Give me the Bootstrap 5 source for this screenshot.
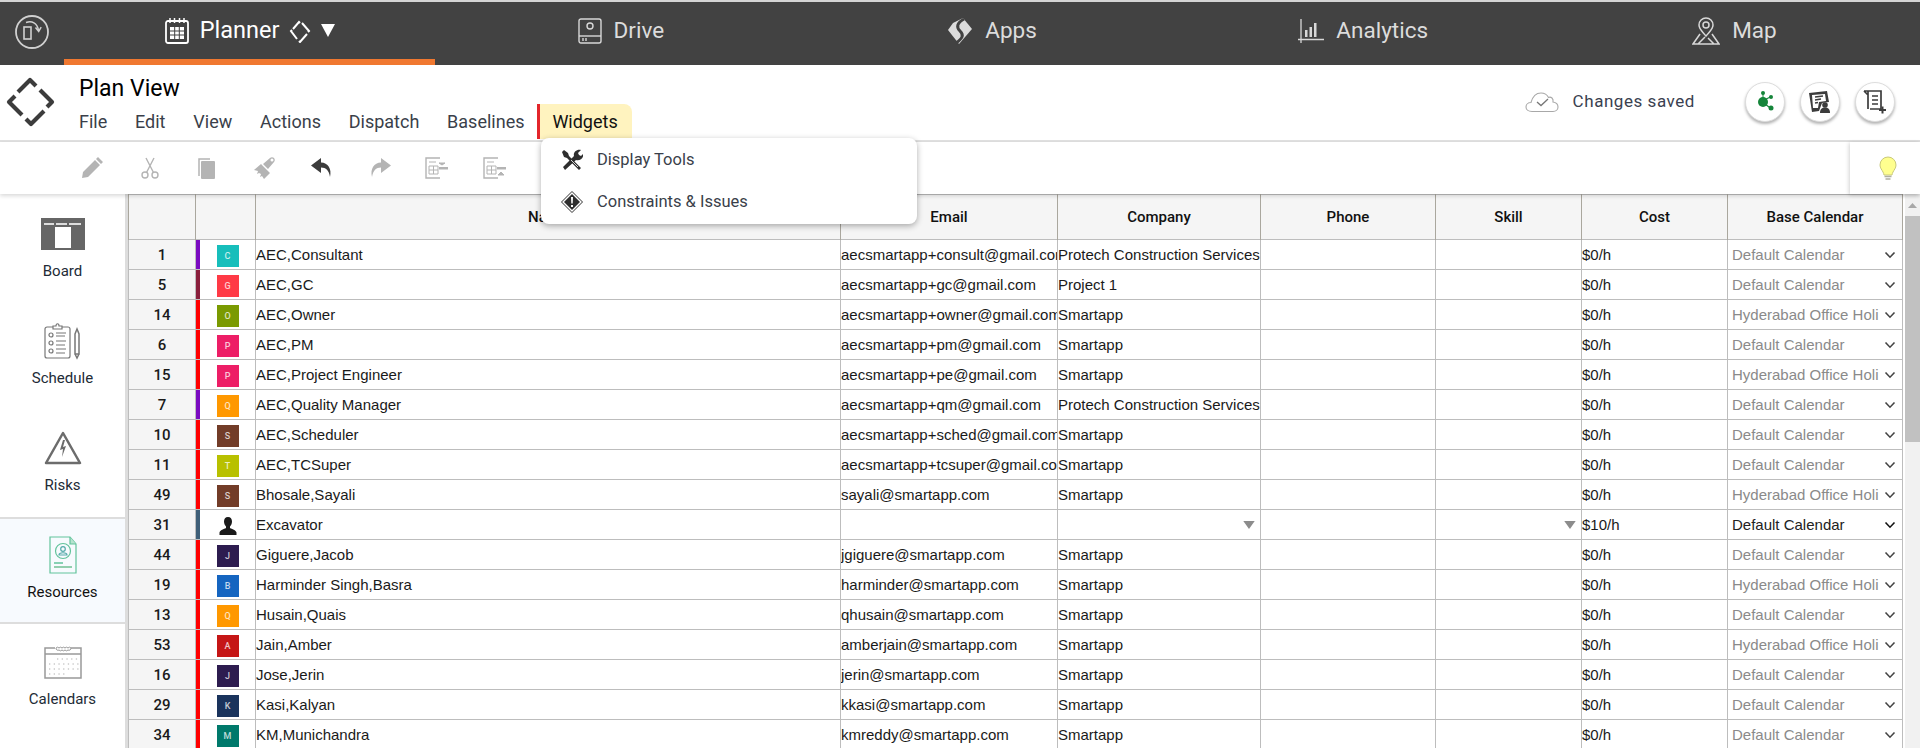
<!DOCTYPE html>
<html lang="en">
<head>
<meta charset="utf-8">
<title>Plan View</title>
<link href="https://cdn.jsdelivr.net/npm/bootstrap@5.3.0/dist/css/bootstrap.min.css" rel="stylesheet">
<style>
html,body{height:748px;overflow:hidden}
body{font-family:Roboto,"Liberation Sans",sans-serif;color:#212529;background:#fff}
.top-strip{height:2px;background:#d4d4d4}
.app-bar{height:63px;background:#424242}
.app-home{width:64px}
.app-tab{flex:1 1 0;height:63px;color:#dcdcdc;font-size:22.5px;gap:12px;text-decoration:none;padding-bottom:6px}
.app-tab.on{color:#fff;font-size:23.5px;border-bottom:6px solid #f07830;padding-bottom:0;gap:10px}
.head-row{height:77px;border-bottom:2px solid #e0e0e0}
.head-logo{width:79px;padding-left:6px;padding-bottom:2px}
.plan-title{font-size:23px;line-height:28px;color:#000;margin-top:10px}
.menu-row{margin-left:-13.9px;margin-top:1px;height:36px}
.menu-link{padding:0 13.9px;font-size:18px;line-height:36px;color:#3a3f4a}
.menu-link.hot{padding:0 14px 0 12px;background:#fff3bf;border-left:3px solid #e3262b;border-top-right-radius:8px;color:#111;height:35px;margin-left:-1px}
.saved{color:#3a4150;font-size:17px;letter-spacing:.55px;gap:14px;margin-right:50px}
.round-btn{width:40px;height:40px;border-radius:50%;background:#fff;border:1px solid #ddd;box-shadow:0 2px 3px rgba(0,0,0,.3);margin-right:15px}
.head-end{padding-right:10px;padding-bottom:1px}
.tool-row{height:52px;box-shadow:0 2px 4px rgba(0,0,0,.15);position:relative;z-index:2;padding-left:80px;gap:33.5px}
.tip-box{width:70px;height:52px;background:#fff;box-shadow:-1px 1px 4px rgba(0,0,0,.18);padding-left:29px}
.work{height:554px;overflow:hidden}
.side{width:128px;flex:none;border-right:3px solid #ddd;padding-top:2px}
.side-item{height:107px;color:#222b36;font-size:15px;line-height:22px;padding-top:12px}
.side-icon{height:52px}
.side-item.on{background:#f7fafe;border-top:2px solid #ddd;border-bottom:2px solid #ddd;height:107px;color:#111;padding-top:10px}
.grid-wrap{flex:1 1 0;overflow:hidden}
.res-grid.table{table-layout:fixed;width:1774px;margin:0;border-color:#bdbdbd;font-family:"Liberation Sans",Arial,sans-serif;font-size:15px;color:#1a1a1a}
.res-grid.table>*>*>*{padding:1px 0 0;height:30px;line-height:28px;white-space:nowrap;overflow:hidden;vertical-align:middle;border-color:#bdbdbd}
.res-grid.table>thead>tr>th{height:45px;padding:0;background:#f5f5f5;font:500 15px/44px Roboto,sans-serif;color:#111;text-align:center;border-color:#aaa79e;border-top:0}
.res-grid.table>tbody>tr>td.num{background:#f5f5f5;font:500 15px/28px Roboto,sans-serif;text-align:center}
.res-grid.table>tbody>tr>td.pic{text-align:center}
.res-grid.table>tbody>tr>td.bar-red{box-shadow:inset 4px 0 0 #f00}
.res-grid.table>tbody>tr>td.bar-purple{box-shadow:inset 4px 0 0 #7a0bc0}
.res-grid.table>tbody>tr>td.bar-maroon{box-shadow:inset 4px 0 0 #8a1f3c}
.res-grid.table>tbody>tr>td.bar-slate{box-shadow:inset 4px 0 0 #3f5f78}
.face{display:inline-flex;align-items:center;justify-content:center;width:22px;height:22px;margin-left:4px;vertical-align:middle;color:rgba(255,255,255,.75);font:500 9px/1 Roboto,sans-serif}
.f-teal{background:#17bebb}.f-red{background:#ff3a46}.f-olive{background:#7a9a01}.f-pink{background:#ed1e66}.f-orange{background:#ff9800}.f-brown{background:#723c28}.f-lime{background:#b8c000}.f-plum{background:#2d1c4f}.f-blue{background:#1565c0}.f-crim{background:#c51616}.f-navy{background:#1a335c}.f-green{background:#00796b}
.cal{color:#8a8a8a;padding:0 6px 0 4px}
.cal span{flex:1 1 0;min-width:0;overflow:hidden;margin-right:5px}
.cal svg{color:#444;flex:none}
.cal.live{color:#222}
.cal.live svg{color:#111}
.pick-end{height:24px;padding-right:5px}
.bar-track{width:15px;flex:none;background:#f1f1f1}
.bar-arrow{height:22px}
.bar-thumb{height:226px;background:#c1c1c1}
.menu-pop{position:absolute;left:541px;top:138px;width:376px;height:86px;min-width:0;padding:0;border:0;border-radius:8px;box-shadow:0 2px 6px rgba(0,0,0,.32);z-index:10}
.menu-pop .dropdown-item{height:42px;padding:0 0 0 20px;gap:14px;font-size:16.5px;color:#3a3f4a}
.menu-pop .dropdown-item:first-child{margin-top:1px}
</style>
</head>
<body>
<svg width="0" height="0" class="position-absolute">
  <symbol id="chev" viewBox="0 0 12 8"><path d="M1.5 1.5 6 6.2l4.500-4.700" fill="none" stroke="currentColor" stroke-width="1.600"/></symbol>
  <symbol id="person" viewBox="0 0 20 20"><path d="M10 1c2.700 0 4 2 4 4.500 0 2-1 4-2 5v1.500c2 1 6 2 6.500 4.500V19h-17v-2.500C2 14 6 13 8 12v-1.500c-1-1-2-3-2-5C6 3 7.300 1 10 1z" fill="#1a1a1a"/></symbol>
  <symbol id="tick" viewBox="0 0 10 7"><path d="M0 0h10L5 7z" fill="#8c8c8c"/></symbol>
</svg>

<div class="top-strip"></div>
<nav class="app-bar d-flex align-items-stretch">
  <div class="app-home d-flex align-items-center justify-content-center pb-1">
    <svg width="38" height="38" viewBox="0 0 38 38" fill="none" stroke="#d0d0d0"><circle cx="19" cy="19" r="16" stroke-width="1.800"/><rect x="11" y="14" width="7" height="12" stroke-width="1.600"/><path d="M13 9.500c6-2 11 .5 12.500 7.500" stroke-width="1.500"/><path d="M22.500 14.500l3.200 4 2.500-4.300" stroke-width="1.500"/></svg>
  </div>
  <a class="app-tab on d-flex align-items-center justify-content-center" href="#">
    <svg width="26" height="28" viewBox="0 0 26 28" fill="none" stroke="#fff"><rect x="2" y="4" width="22" height="22" rx="2" stroke-width="1.800"/><path d="M6 1v5M10.500 1v5M15.500 1v5M20 1v5" stroke-width="1.500"/><path d="M6 10h14v12H6z" fill="#fff" stroke="none"/><path d="M10.700 10v12M15.300 10v12M6 14h14M6 18h14" stroke="#424242"/></svg>
    <span>Planner</span>
    <svg width="22" height="24" viewBox="0 0 22 24" fill="none" stroke="#fff" stroke-width="2"><path d="M4 10 10 3l1 1M13 4l7 8-1 1M18 15l-7 8-1-1M8 20l-6-8 1-1"/></svg>
    <svg width="14" height="13" viewBox="0 0 14 13"><path d="M0 0h14L7 13z" fill="#fff"/></svg>
  </a>
  <a class="app-tab d-flex align-items-center justify-content-center" href="#">
    <svg width="24" height="26" viewBox="0 0 24 26" fill="none" stroke="#d8d8d8" stroke-width="1.400"><rect x="1" y="1" width="22" height="24" rx="2"/><path d="M1 18h22"/><circle cx="12" cy="8" r="3"/><path d="M5 20v3M8 20v3"/></svg>
    <span>Drive</span>
  </a>
  <a class="app-tab d-flex align-items-center justify-content-center" href="#">
    <svg width="26" height="28" viewBox="0 0 26 28"><path d="M16 1 25 12 12 27 1 13 6 6z" fill="#dcdcdc"/><path d="M17 2C10 6 9 10 13 14s3 7-4 12" fill="none" stroke="#424242" stroke-width="3"/></svg>
    <span>Apps</span>
  </a>
  <a class="app-tab d-flex align-items-center justify-content-center" href="#">
    <svg width="26" height="26" viewBox="0 0 26 26" fill="none" stroke="#d8d8d8"><path d="M3 1v24M0 21.500h26" stroke-width="1.300"/><path d="M7 19h2.500v-7H7zM11.500 19H14V9h-2.500zM16 19h2.500V5H16z" fill="#d8d8d8" stroke="none"/></svg>
    <span>Analytics</span>
  </a>
  <a class="app-tab d-flex align-items-center justify-content-center" href="#">
    <svg width="28" height="28" viewBox="0 0 28 28" fill="none" stroke="#d8d8d8" stroke-width="1.500"><path d="M14 19C10 14 7 12 7 8a7 7 0 0 1 14 0c0 4-3 6-7 11z"/><circle cx="14" cy="8" r="3"/><path d="M8 17 1 27h26l-7-10M6 27l7-7M22 27l-6-6"/></svg>
    <span>Map</span>
  </a>
</nav>

<header class="head-row d-flex">
  <div class="head-logo d-flex align-items-center">
    <svg width="50" height="50" viewBox="0 0 50 50" fill="none" stroke="#3c3c3c" stroke-width="4.200" stroke-linejoin="round"><path d="M12 15 24 3l6 6M34 13l12 12-5 5M38 34 25 47l-5-5M16 38 3 25l6-6"/></svg>
  </div>
  <div>
    <div class="plan-title">Plan View</div>
    <div class="menu-row d-flex">
      <div class="menu-link">File</div>
      <div class="menu-link">Edit</div>
      <div class="menu-link">View</div>
      <div class="menu-link">Actions</div>
      <div class="menu-link">Dispatch</div>
      <div class="menu-link">Baselines</div>
      <div class="menu-link hot">Widgets</div>
    </div>
  </div>
  <div class="head-end ms-auto d-flex align-items-center">
    <div class="saved d-flex align-items-center">
      <svg width="34" height="22" viewBox="0 0 34 22" fill="none" stroke="#a8a8a8" stroke-width="1.100"><path d="M7 20.500C3 20.500 1 18.500 1 16s2-4.500 5-4.500C7.500 6 11 2 16 2c3.500 0 6 1.500 7.500 4.500 1-.5 2.500-.3 3.500.5 1 1 1.300 2.500 1 4 3 .5 5 2.500 5 5s-2 4.500-5 4.500z"/><path d="M12 11l4 3.500 7-6.500" stroke="#777" stroke-width="1.300"/></svg>
      <span>Changes saved</span>
    </div>
    <div class="round-btn d-flex align-items-center justify-content-center">
      <svg width="20" height="24" viewBox="0 0 20 24" fill="#15853a"><circle cx="8" cy="12" r="5"/><circle cx="8" cy="3" r="2"/><circle cx="16" cy="7" r="2"/><circle cx="16" cy="18" r="2.500"/><path d="M7.500 3h1v6h-1zM10 9l5-2.500.5 1-5 2.500zM11 14l4 3-.7 1-4-3z"/></svg>
    </div>
    <div class="round-btn d-flex align-items-center justify-content-center">
      <svg width="24" height="24" viewBox="0 0 24 24"><path d="M1 3 19 1l2 11-7 1-3 8-7 1z" fill="#3c3c3c"/><path d="M4 5l13-1 1 7-7 1-1 6H5z" fill="#fff"/><path d="M7 7l8-1M7 10l6-1M7 13l3-.5" stroke="#3c3c3c" stroke-width="1.300"/><circle cx="17" cy="15" r="2.800" fill="#3c3c3c"/><path d="M12 23c0-4 2-5.500 5-5.500s5 1.500 5 5.500z" fill="#3c3c3c"/></svg>
    </div>
    <div class="round-btn d-flex align-items-center justify-content-center">
      <svg width="24" height="26" viewBox="0 0 24 26" fill="none" stroke="#3c3c3c" stroke-width="1.700"><path d="M1 2h17v18H7M5 2v18M1 2l4 4M9 7h6M9 11h6M9 15h6"/><path d="M16 21h7M19.500 17.500v7" stroke-width="2"/></svg>
    </div>
  </div>
</header>

<div class="tool-row d-flex align-items-center">
  <svg width="24" height="24" viewBox="0 0 24 24" fill="#b4b4b4"><path d="M2 22l1-6L15 4l5 5L8 21zM16 3l2-2 5 5-2 2z"/></svg>
  <svg width="24" height="24" viewBox="0 0 24 24" fill="none" stroke="#b4b4b4" stroke-width="1.400"><circle cx="7" cy="19" r="3"/><circle cx="17" cy="19" r="3"/><path d="M8.500 16.500 16 2M15.500 16.500 8 2"/></svg>
  <svg width="24" height="24" viewBox="0 0 24 24"><path d="M4 20V3h11" fill="none" stroke="#b4b4b4" stroke-width="1.500"/><rect x="6" y="5" width="14" height="18" rx="1" fill="#b4b4b4"/></svg>
  <svg width="24" height="24" viewBox="0 0 24 24" fill="#b4b4b4"><path d="M1 14l7-6 9 9-6 6-2-3-2 1 1-3-2-1-2 1 1-3z"/><path d="M10 8l7-6c1-1 3-1 4 0s1 3 0 4l-6 7z"/><circle cx="19" cy="4" r="1.500" fill="#fff"/></svg>
  <svg width="24" height="24" viewBox="0 0 24 24" fill="#3c3c3c"><path d="M11 2 1 9.500 11 17v-5.500c5 0 8 3 9 9.500 2-8-2-14.500-9-14.500z"/></svg>
  <svg width="24" height="24" viewBox="0 0 24 24" fill="#b4b4b4"><path d="M13 2l10 7.500L13 17v-5.500c-5 0-8 3-9 9.500-2-8 2-14.500 9-14.500z"/></svg>
  <svg width="24" height="24" viewBox="0 0 24 24" fill="none" stroke="#b4b4b4"><path d="M15 2H1v20h14" stroke-width="1.400"/><path d="M4 10h9v8H4zM4 14h9M8.500 10v8"/><path d="M14 11h9v2.500h-9z" fill="#b4b4b4" stroke="none"/><path d="M4 6h7M14 7l3 2 3-2z" fill="#b4b4b4"/></svg>
  <svg width="24" height="24" viewBox="0 0 24 24" fill="none" stroke="#b4b4b4"><path d="M15 2H1v20h14" stroke-width="1.400"/><path d="M4 10h9v8H4zM4 14h9M8.500 10v8"/><path d="M14 11h9v2.500h-9z" fill="#b4b4b4" stroke="none"/><path d="M4 6h7M15 19l3-3 3 3z" fill="#b4b4b4"/></svg>
  <div class="tip-box ms-auto d-flex align-items-center">
    <svg width="18" height="24" viewBox="0 0 18 24"><path d="M9 1a8 8 0 0 0-8 8c0 3 2 5 3 7 .5 1 .8 2 1 3h8c.2-1 .5-2 1-3 1-2 3-4 3-7a8 8 0 0 0-8-8z" fill="#ffff8f" stroke="#c9c97a"/><path d="M5.500 20.500h7M6.500 23h5" stroke="#b0b0a0" stroke-width="1.500"/></svg>
  </div>
</div>

<div class="dropdown-menu show menu-pop">
  <a class="dropdown-item d-flex align-items-center" href="#">
    <svg width="22" height="22" viewBox="0 0 22 22" fill="#2e2e2e"><path d="M1 3l2-2 4 3 1 3 12 12-2 2L6 9 3 8z"/><path d="M2 18 13 7c-1-3 2-7 7-6l-3 3 1 2 2 1 2-2c1 4-3 7-7 6L4 21z"/><path d="M10 11l7 7" stroke="#fff" stroke-width=".8"/></svg>
    <span>Display Tools</span>
  </a>
  <a class="dropdown-item d-flex align-items-center" href="#">
    <svg width="22" height="22" viewBox="0 0 22 22"><path d="M11 .5 21.500 11 11 21.500.5 11z" fill="#fff" stroke="#2e2e2e"/><path d="M11 3l8 8-8 8-8-8z" fill="#2e2e2e"/><path d="M10 6h2l-.3 6.500h-1.400zM10 14h2v2h-2z" fill="#fff"/></svg>
    <span>Constraints &amp; Issues</span>
  </a>
</div>

<main class="work d-flex">
  <aside class="side">
    <div class="side-item d-flex flex-column align-items-center">
      <div class="side-icon d-flex align-items-center">
        <svg width="44" height="32" viewBox="0 0 44 32"><rect width="44" height="32" fill="#666"/><path d="M14 9h16v21H14z" fill="#fff"/><path d="M3 5h10v2H3zM15 5h11v2H15zM28 5h12v2H28z" fill="#ddd"/></svg>
      </div>
      <div>Board</div>
    </div>
    <div class="side-item d-flex flex-column align-items-center">
      <div class="side-icon d-flex align-items-center">
        <svg width="38" height="38" viewBox="0 0 38 38" fill="none" stroke="#777" stroke-width="1.200"><path d="M9 5H3a2 2 0 0 0-2 2v27a2 2 0 0 0 2 2h21a2 2 0 0 0 2-2V7a2 2 0 0 0-2-2h-6"/><path d="M9 7V4h3c0-3 3-3 3 0h3v3z"/><circle cx="7" cy="13" r="2"/><circle cx="7" cy="21" r="2"/><circle cx="7" cy="29" r="2"/><path d="M12 11h10M12 14h9M12 19h10M12 23h9M12 27h10M12 31h9"/><path d="M31 12l2-5 2 5v20h-4zM31 32l2 4 2-4" stroke-width="1.500"/></svg>
      </div>
      <div>Schedule</div>
    </div>
    <div class="side-item d-flex flex-column align-items-center">
      <div class="side-icon d-flex align-items-center">
        <svg width="38" height="34" viewBox="0 0 38 34"><path d="M19 2 36 32H2z" fill="none" stroke="#6c6c6c" stroke-width="2.500" stroke-linejoin="round"/><path d="M19 9l-3 10 3-1-1 8 4-11-3 1 2-7z" fill="#6c6c6c"/></svg>
      </div>
      <div>Risks</div>
    </div>
    <div class="side-item on d-flex flex-column align-items-center">
      <div class="side-icon d-flex align-items-center">
        <svg width="28" height="38" viewBox="0 0 28 38" fill="none" stroke="#62c39b" stroke-width="1.200"><path d="M1 1h20l6 7v29H1z"/><path d="M21 1v7h6" fill="#b6e3cf"/><circle cx="14" cy="15" r="7.500"/><circle cx="14" cy="13" r="2.300" stroke="#5aa"/><path d="M10 19c0-3 8-3 8 0z" stroke="#5aa"/><path d="M5 27h9" stroke-width="1.500"/><path d="M5 31h18" stroke="#86c9a5" stroke-width="1.800"/></svg>
      </div>
      <div>Resources</div>
    </div>
    <div class="side-item d-flex flex-column align-items-center">
      <div class="side-icon d-flex align-items-center">
        <svg width="38" height="34" viewBox="0 0 38 34" fill="none" stroke="#999" stroke-width="1.500"><path d="M11 3H1v30h36V3H27M1 9h36"/><path d="M12 3a2 2 0 0 1 3 0 2 2 0 0 1 3 0 2 2 0 0 1 3 0 2 2 0 0 1 3 0 2 2 0 0 1 3 0 2 2 0 0 1-3 2 2 2 0 0 1-3 0 2 2 0 0 1-3 0 2 2 0 0 1-3 0 2 2 0 0 1-3-2" stroke-width="1"/><path d="M13 14h22M5 19h30M5 24h30M5 29h18" stroke="#b0b0b0" stroke-width="1.200" stroke-dasharray="1.300 3.400"/></svg>
      </div>
      <div>Calendars</div>
    </div>
  </aside>

  <div class="grid-wrap">
    <table class="table table-bordered res-grid">
      <colgroup><col style="width:67px"><col style="width:60px"><col style="width:585px"><col style="width:217px"><col style="width:203px"><col style="width:175px"><col style="width:146px"><col style="width:146px"><col style="width:175px"></colgroup>
      <thead><tr><th></th><th></th><th>Name</th><th>Email</th><th>Company</th><th>Phone</th><th>Skill</th><th>Cost</th><th>Base Calendar</th></tr></thead>
      <tbody>
        <tr><td class="num">1</td><td class="pic bar-purple"><span class="face f-teal">C</span></td><td>AEC,Consultant</td><td>aecsmartapp+consult@gmail.com</td><td>Protech Construction Services</td><td></td><td></td><td>$0/h</td><td><div class="cal d-flex align-items-center"><span>Default Calendar</span><svg width="12" height="8"><use href="#chev"/></svg></div></td></tr>
        <tr><td class="num">5</td><td class="pic bar-maroon"><span class="face f-red">G</span></td><td>AEC,GC</td><td>aecsmartapp+gc@gmail.com</td><td>Project 1</td><td></td><td></td><td>$0/h</td><td><div class="cal d-flex align-items-center"><span>Default Calendar</span><svg width="12" height="8"><use href="#chev"/></svg></div></td></tr>
        <tr><td class="num">14</td><td class="pic bar-red"><span class="face f-olive">O</span></td><td>AEC,Owner</td><td>aecsmartapp+owner@gmail.com</td><td>Smartapp</td><td></td><td></td><td>$0/h</td><td><div class="cal d-flex align-items-center"><span>Hyderabad Office Holi</span><svg width="12" height="8"><use href="#chev"/></svg></div></td></tr>
        <tr><td class="num">6</td><td class="pic bar-red"><span class="face f-pink">P</span></td><td>AEC,PM</td><td>aecsmartapp+pm@gmail.com</td><td>Smartapp</td><td></td><td></td><td>$0/h</td><td><div class="cal d-flex align-items-center"><span>Default Calendar</span><svg width="12" height="8"><use href="#chev"/></svg></div></td></tr>
        <tr><td class="num">15</td><td class="pic bar-red"><span class="face f-pink">P</span></td><td>AEC,Project Engineer</td><td>aecsmartapp+pe@gmail.com</td><td>Smartapp</td><td></td><td></td><td>$0/h</td><td><div class="cal d-flex align-items-center"><span>Hyderabad Office Holi</span><svg width="12" height="8"><use href="#chev"/></svg></div></td></tr>
        <tr><td class="num">7</td><td class="pic bar-purple"><span class="face f-orange">Q</span></td><td>AEC,Quality Manager</td><td>aecsmartapp+qm@gmail.com</td><td>Protech Construction Services</td><td></td><td></td><td>$0/h</td><td><div class="cal d-flex align-items-center"><span>Default Calendar</span><svg width="12" height="8"><use href="#chev"/></svg></div></td></tr>
        <tr><td class="num">10</td><td class="pic bar-red"><span class="face f-brown">S</span></td><td>AEC,Scheduler</td><td>aecsmartapp+sched@gmail.com</td><td>Smartapp</td><td></td><td></td><td>$0/h</td><td><div class="cal d-flex align-items-center"><span>Default Calendar</span><svg width="12" height="8"><use href="#chev"/></svg></div></td></tr>
        <tr><td class="num">11</td><td class="pic bar-red"><span class="face f-lime">T</span></td><td>AEC,TCSuper</td><td>aecsmartapp+tcsuper@gmail.com</td><td>Smartapp</td><td></td><td></td><td>$0/h</td><td><div class="cal d-flex align-items-center"><span>Default Calendar</span><svg width="12" height="8"><use href="#chev"/></svg></div></td></tr>
        <tr><td class="num">49</td><td class="pic bar-red"><span class="face f-brown">S</span></td><td>Bhosale,Sayali</td><td>sayali@smartapp.com</td><td>Smartapp</td><td></td><td></td><td>$0/h</td><td><div class="cal d-flex align-items-center"><span>Hyderabad Office Holi</span><svg width="12" height="8"><use href="#chev"/></svg></div></td></tr>
        <tr><td class="num">31</td><td class="pic bar-slate"><svg class="ms-1" width="20" height="20"><use href="#person"/></svg></td><td>Excavator</td><td></td><td><div class="pick-end d-flex justify-content-end align-items-center"><svg width="12" height="8"><use href="#tick"/></svg></div></td><td></td><td><div class="pick-end d-flex justify-content-end align-items-center"><svg width="12" height="8"><use href="#tick"/></svg></div></td><td>$10/h</td><td><div class="cal live d-flex align-items-center"><span>Default Calendar</span><svg width="12" height="8"><use href="#chev"/></svg></div></td></tr>
        <tr><td class="num">44</td><td class="pic bar-red"><span class="face f-plum">J</span></td><td>Giguere,Jacob</td><td>jgiguere@smartapp.com</td><td>Smartapp</td><td></td><td></td><td>$0/h</td><td><div class="cal d-flex align-items-center"><span>Default Calendar</span><svg width="12" height="8"><use href="#chev"/></svg></div></td></tr>
        <tr><td class="num">19</td><td class="pic bar-red"><span class="face f-blue">B</span></td><td>Harminder Singh,Basra</td><td>harminder@smartapp.com</td><td>Smartapp</td><td></td><td></td><td>$0/h</td><td><div class="cal d-flex align-items-center"><span>Hyderabad Office Holi</span><svg width="12" height="8"><use href="#chev"/></svg></div></td></tr>
        <tr><td class="num">13</td><td class="pic bar-red"><span class="face f-orange">Q</span></td><td>Husain,Quais</td><td>qhusain@smartapp.com</td><td>Smartapp</td><td></td><td></td><td>$0/h</td><td><div class="cal d-flex align-items-center"><span>Default Calendar</span><svg width="12" height="8"><use href="#chev"/></svg></div></td></tr>
        <tr><td class="num">53</td><td class="pic bar-red"><span class="face f-crim">A</span></td><td>Jain,Amber</td><td>amberjain@smartapp.com</td><td>Smartapp</td><td></td><td></td><td>$0/h</td><td><div class="cal d-flex align-items-center"><span>Hyderabad Office Holi</span><svg width="12" height="8"><use href="#chev"/></svg></div></td></tr>
        <tr><td class="num">16</td><td class="pic bar-red"><span class="face f-plum">J</span></td><td>Jose,Jerin</td><td>jerin@smartapp.com</td><td>Smartapp</td><td></td><td></td><td>$0/h</td><td><div class="cal d-flex align-items-center"><span>Default Calendar</span><svg width="12" height="8"><use href="#chev"/></svg></div></td></tr>
        <tr><td class="num">29</td><td class="pic bar-red"><span class="face f-navy">K</span></td><td>Kasi,Kalyan</td><td>kkasi@smartapp.com</td><td>Smartapp</td><td></td><td></td><td>$0/h</td><td><div class="cal d-flex align-items-center"><span>Default Calendar</span><svg width="12" height="8"><use href="#chev"/></svg></div></td></tr>
        <tr><td class="num">34</td><td class="pic bar-red"><span class="face f-green">M</span></td><td>KM,Munichandra</td><td>kmreddy@smartapp.com</td><td>Smartapp</td><td></td><td></td><td>$0/h</td><td><div class="cal d-flex align-items-center"><span>Default Calendar</span><svg width="12" height="8"><use href="#chev"/></svg></div></td></tr>
      </tbody>
    </table>
  </div>
  <div class="bar-track">
    <div class="bar-arrow d-flex justify-content-center align-items-center"><svg width="9" height="5" viewBox="0 0 9 5"><path d="M0 5h9L4.500 0z" fill="#a8a8a8"/></svg></div>
    <div class="bar-thumb"></div>
  </div>
</main>
<script src="https://cdn.jsdelivr.net/npm/bootstrap@5.3.0/dist/js/bootstrap.bundle.min.js"></script>
</body>
</html>
